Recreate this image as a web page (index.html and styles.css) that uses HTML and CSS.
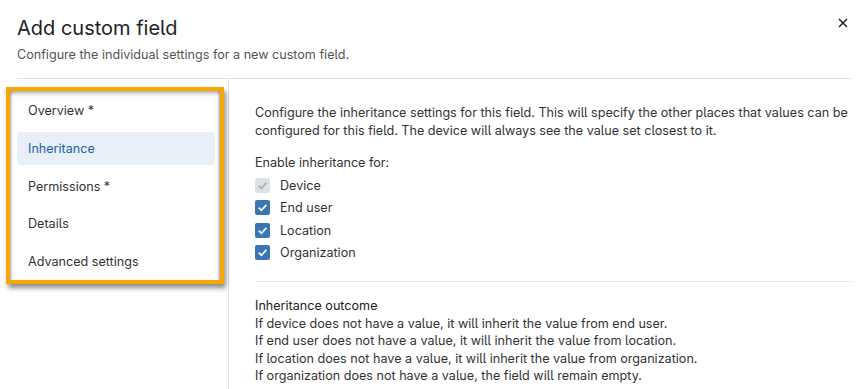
FILE: index.html
```html
<!DOCTYPE html>
<html lang="en">
<head>
    <meta charset="UTF-8">
    <meta name="viewport" content="width=device-width, initial-scale=1.0">
    <title>Add custom field</title>
    <link rel="stylesheet" href="styles.css">
</head>
<body>
    <div class="modal">
        <div class="modal-header">
            <div>
                <h1>Add custom field</h1>
                <p class="subtitle">Configure the individual settings for a new custom field.</p>
            </div>
            <button class="close" aria-label="Close">
                <svg width="10" height="10" viewBox="0 0 10 10">
                    <path d="M1 1 L9 9 M9 1 L1 9" stroke="#222" stroke-width="1.5" fill="none"/>
                </svg>
            </button>
        </div>

        <div class="modal-body">
            <div class="sidebar">
                <nav class="steps">
                    <a class="step">Overview *</a>
                    <a class="step active">Inheritance</a>
                    <a class="step">Permissions *</a>
                    <a class="step">Details</a>
                    <a class="step">Advanced settings</a>
                </nav>
            </div>

            <div class="content">
                <p class="intro">Configure the inheritance settings for this field. This will specify the other places that values can be configured for this field. The device will always see the value set closest to it.</p>

                <p class="label">Enable inheritance for:</p>
                <ul class="checks">
                    <li><span class="box disabled"><svg viewBox="0 0 14 14"><path d="M3.5 7.2 L6 9.6 L10.6 4.6" /></svg></span>Device</li>
                    <li><span class="box"><svg viewBox="0 0 14 14"><path d="M3.5 7.2 L6 9.6 L10.6 4.6" /></svg></span>End user</li>
                    <li><span class="box"><svg viewBox="0 0 14 14"><path d="M3.5 7.2 L6 9.6 L10.6 4.6" /></svg></span>Location</li>
                    <li><span class="box"><svg viewBox="0 0 14 14"><path d="M3.5 7.2 L6 9.6 L10.6 4.6" /></svg></span>Organization</li>
                </ul>

                <div class="outcome">
                    <h3>Inheritance outcome</h3>
                    <p>If device does not have a value, it will inherit the value from end user.</p>
                    <p>If end user does not have a value, it will inherit the value from location.</p>
                    <p>If location does not have a value, it will inherit the value from organization.</p>
                    <p>If organization does not have a value, the field will remain empty.</p>
                </div>
            </div>
        </div>
    </div>
</body>
</html>
```

FILE: styles.css
```css
body {
    margin: 0;
    font-family: Inter, 'Noto Sans', sans-serif;
    font-feature-settings: "cv05";
    color: #333;
    background: #fff;
    overflow: hidden;
}

.modal {
    padding: 0 10px 0 17px;
}

.modal-header {
    display: flex;
    justify-content: space-between;
    align-items: flex-start;
    padding-top: 14px;
    padding-bottom: 14px;
    border-bottom: 1px solid #dfe3e8;
}

h1 {
    margin: 0;
    font-size: 20px;
    font-weight: 400;
    line-height: 28px;
    color: #222;
}

.subtitle {
    margin: 4px 0 0;
    font-size: 12.6px;
    line-height: 18px;
    color: #555;
}

.close {
    background: none;
    border: none;
    padding: 0;
    margin: 3px 3px 0 0;
    width: 12px;
    height: 12px;
    display: flex;
    align-items: center;
    justify-content: center;
    cursor: pointer;
}

.modal-body {
    display: grid;
    grid-template-columns: 212px 1fr;
}

.sidebar {
    border-right: 1px solid #e4e6e9;
    padding-top: 8px;
    min-height: 320px;
}

.steps {
    box-sizing: border-box;
    display: flex;
    flex-direction: column;
    gap: 4.75px;
    margin-left: -11px;
    width: 218px;
    padding: 3px 5px 2px 7px;
    border: 4px solid #f7a800;
    box-shadow: 2px 4px 5px rgba(0, 0, 0, 0.45), inset 0 3px 4px -1px rgba(0, 0, 0, 0.35), inset 3px 0 3px -2px rgba(0, 0, 0, 0.25), inset -3px 0 3px -2px rgba(0, 0, 0, 0.3);
}

.step {
    height: 33px;
    display: flex;
    align-items: center;
    padding-left: 11px;
    font-size: 12.6px;
    color: #333;
    border-radius: 4px;
}

.step.active {
    background: #e8eff7;
    color: #1e63a8;
}

.content {
    padding: 25px 0 0 26px;
    font-size: 12.6px;
}

.intro {
    margin: 0;
    line-height: 18px;
}

.label {
    margin: 14px 0 2px;
    line-height: 18px;
}

.checks {
    list-style: none;
    margin: 0;
    padding: 0;
}

.checks li {
    display: flex;
    align-items: center;
    gap: 10px;
    height: 22.5px;
}

.box {
    width: 15px;
    height: 15px;
    border-radius: 2px;
    background: #3a76b4;
    display: flex;
}

.box svg {
    width: 15px;
    height: 15px;
}

.box path {
    stroke: #fff;
    stroke-width: 1.6;
    fill: none;
}

.box.disabled {
    background: #dde0e4;
}

.box.disabled path {
    stroke: #a9afb6;
}

.outcome {
    margin-top: 17px;
    padding-top: 15px;
    border-top: 1px solid #e4e6e9;
}

.outcome h3 {
    margin: 0;
    font-size: 12.6px;
    font-weight: 400;
    line-height: 17.5px;
    color: #222;
}

.outcome p {
    margin: 0;
    line-height: 17.5px;
}
```
